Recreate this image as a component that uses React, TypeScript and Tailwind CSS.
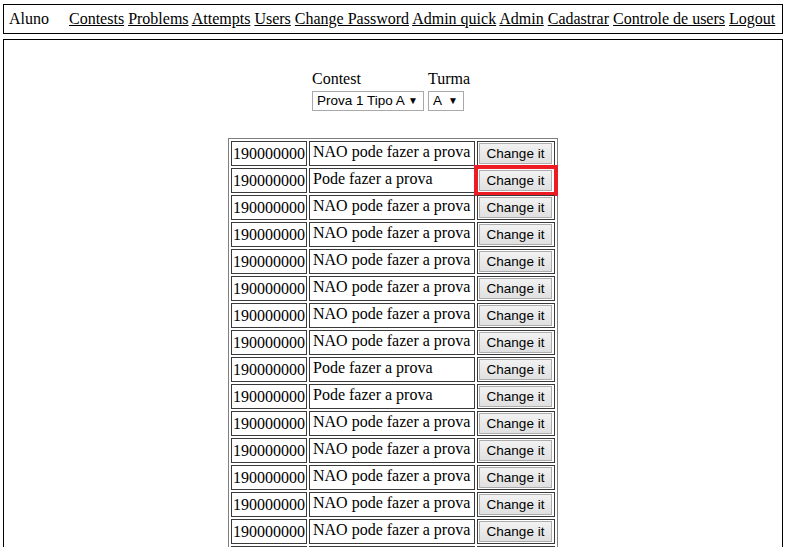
import React from "react";

const rows: [string, boolean][] = [
  ["NAO pode fazer a prova", false],
  ["Pode fazer a prova", true],
  ["NAO pode fazer a prova", false],
  ["NAO pode fazer a prova", false],
  ["NAO pode fazer a prova", false],
  ["NAO pode fazer a prova", false],
  ["NAO pode fazer a prova", false],
  ["NAO pode fazer a prova", false],
  ["Pode fazer a prova", false],
  ["Pode fazer a prova", false],
  ["NAO pode fazer a prova", false],
  ["NAO pode fazer a prova", false],
  ["NAO pode fazer a prova", false],
  ["NAO pode fazer a prova", false],
  ["NAO pode fazer a prova", false],
  ["NAO pode fazer a prova", false],
];

const links = [
  "Contests",
  "Problems",
  "Attempts",
  "Users",
  "Change Password",
  "Admin quick",
  "Admin",
  "Cadastrar",
  "Controle de users",
  "Logout",
];

function FakeSelect({ label, width }: { label: string; width: string }) {
  return (
    <div
      className={`flex items-center justify-between h-[20px] border border-[#a9a9a9] bg-white pl-[4px] pr-[5px] font-['Liberation_Sans',Arial,sans-serif] text-[13.5px] text-black ${width}`}
    >
      <span>{label}</span>
      <span className="text-[10px] leading-none">▼</span>
    </div>
  );
}

export default function App() {
  return (
    <div className="min-h-[547px] bg-white px-[3px] pt-[4px] font-['Liberation_Serif','Times_New_Roman',serif] text-[16px] leading-[18px] text-black">
      <div className="flex h-[30px] items-center border border-black">
        <span className="pl-[5px] w-[65px]">Aluno</span>
        <span>
          {links.map((l, i) => (
            <React.Fragment key={l}>
              <a href="#" className="underline text-black">
                {l}
              </a>
              {i < links.length - 1 ? " " : ""}
            </React.Fragment>
          ))}
        </span>
      </div>

      <div className="mt-[5px] h-[520px] border border-black border-b-0 pt-[30px]">
        <div className="flex justify-center pr-[4px] gap-[4px]">
          <div className="flex flex-col gap-[3px]">
            <span>Contest</span>
            <FakeSelect label="Prova 1 Tipo A" width="w-[112px]" />
          </div>
          <div className="flex flex-col gap-[3px]">
            <span>Turma</span>
            <FakeSelect label="A" width="w-[36px]" />
          </div>
        </div>

        <div className="mt-[27px] flex justify-center">
          <table className="border-separate border-spacing-[2px] border border-[#808080]">
            <tbody>
              {rows.map(([status, hl], i) => (
                <tr key={i}>
                  <td className="w-[76px] border border-[#3a3a3a] p-[1px] whitespace-nowrap">
                    190000000
                  </td>
                  <td className="w-[166px] border border-[#3a3a3a] p-[1px] pl-[3px] align-top whitespace-nowrap">
                    {status}
                  </td>
                  <td
                    className={`w-[78px] border p-[1px] ${
                      hl
                        ? "border-[#ed1c24] shadow-[0_0_0_3px_#ed1c24]"
                        : "border-[#3a3a3a]"
                    }`}
                  >
                    <button className="h-[21px] w-[73px] border border-[#adadad] bg-[#e1e1e1] bg-gradient-to-b from-[#f2f2f2] to-[#e0e0e0] font-['Liberation_Sans',Arial,sans-serif] text-[13.5px] text-black">
                      Change it
                    </button>
                  </td>
                </tr>
              ))}
            </tbody>
          </table>
        </div>
      </div>
    </div>
  );
}
